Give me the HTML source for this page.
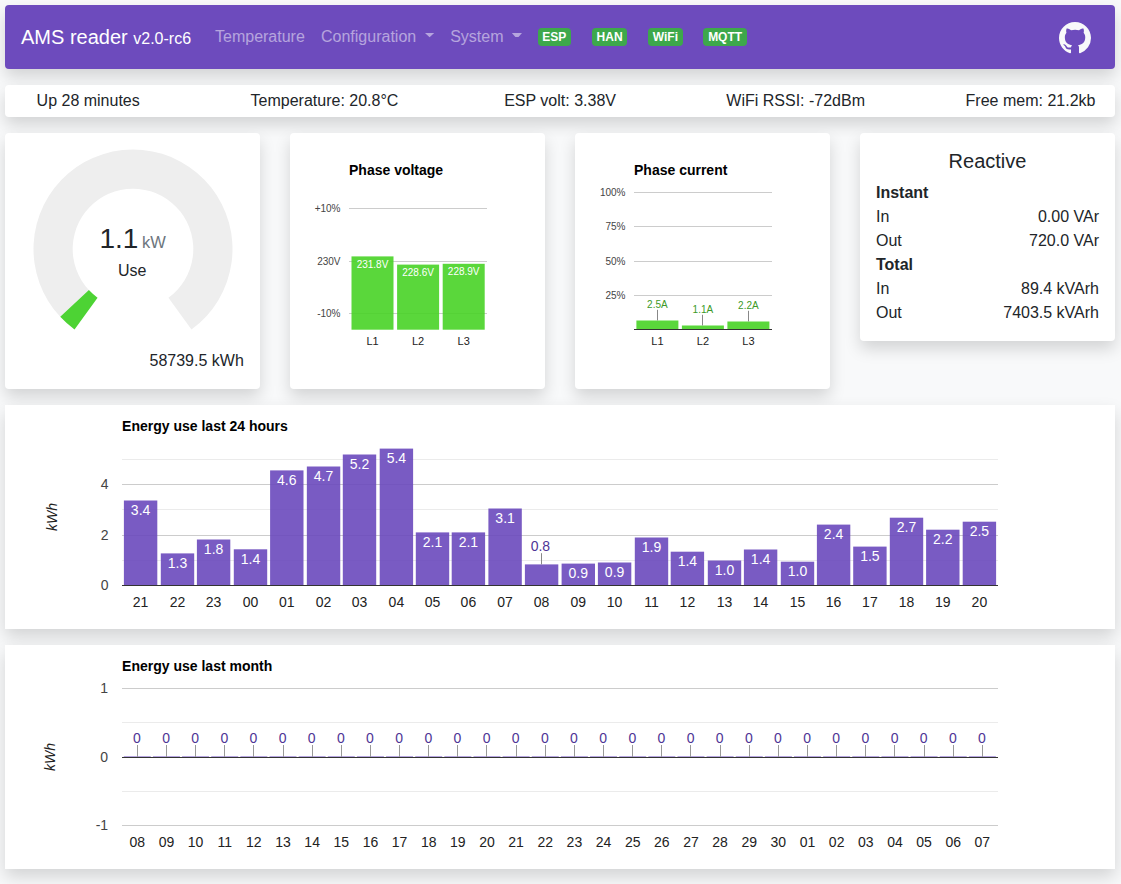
<!DOCTYPE html>
<html><head><meta charset="utf-8"><title>AMS reader</title>
<style>
html,body{margin:0;padding:0;}
body{width:1121px;height:884px;overflow:hidden;background:#f8f9fa;font-family:"Liberation Sans", sans-serif;color:#212529;position:relative;font-size:16px;line-height:1.5;}
.a{position:absolute;white-space:nowrap;}
.card{position:absolute;background:#fff;box-shadow:0 .5rem 1rem rgba(0,0,0,.15);}
.r{border-radius:4px;}
.nav{background:#6d4bbd;}
.nl{color:rgba(255,255,255,.5);font-size:16px;line-height:24px;}
.badge{position:absolute;background:#3da84b;color:#fff;font-weight:bold;font-size:12px;line-height:12px;padding:3px 0;text-align:center;border-radius:4px;height:12px;}
.caret{position:absolute;width:0;height:0;border-top:4.8px solid rgba(255,255,255,.5);border-left:4.8px solid transparent;border-right:4.8px solid transparent;}
svg text{font-family:"Liberation Sans", sans-serif;}
</style></head><body>
<div class="card r nav" style="left:5px;top:5px;width:1110px;height:64px;"></div>
<div class="a" style="left:21px;top:25px;color:#fff;font-size:20px;line-height:24px;">AMS reader <span style="font-size:16px;">v2.0-rc6</span></div>
<div class="a nl" style="left:215px;top:25px;">Temperature</div>
<div class="a nl" style="left:321px;top:25px;">Configuration</div>
<svg class="a" style="left:0;top:0" width="600" height="60"><polygon points="425,33 434.2,33 429.6,37.3" fill="rgba(255,255,255,.5)"/><polygon points="511.9,33 522,33 518.5,37.1 515.4,37.1" fill="rgba(255,255,255,.5)"/></svg>
<div class="a nl" style="left:450.2px;top:25px;">System</div>

<div class="badge" style="left:538px;top:28px;width:32.7px;">ESP</div>
<div class="badge" style="left:592.3px;top:28px;width:34.6px;">HAN</div>
<div class="badge" style="left:648px;top:28px;width:34.8px;">WiFi</div>
<div class="badge" style="left:703.2px;top:28px;width:43.9px;">MQTT</div>
<svg style="position:absolute;left:1059px;top:21.5px;" width="32" height="32" viewBox="0 0 16 16"><path fill="#f8f9fa" d="M8 0C3.58 0 0 3.58 0 8c0 3.54 2.29 6.53 5.47 7.59.4.07.55-.17.55-.38 0-.19-.01-.82-.01-1.49-2.01.37-2.53-.49-2.69-.94-.09-.23-.48-.94-.82-1.13-.28-.15-.68-.52-.01-.53.63-.01 1.08.58 1.23.82.72 1.21 1.87.87 2.33.66.07-.52.28-.87.51-1.07-1.78-.2-3.64-.89-3.64-3.95 0-.87.31-1.59.82-2.15-.08-.2-.36-1.02.08-2.12 0 0 .67-.21 2.2.82.64-.18 1.32-.27 2-.27.68 0 1.36.09 2 .27 1.53-1.04 2.2-.82 2.2-.82.44 1.1.16 1.92.08 2.12.51.56.82 1.27.82 2.15 0 3.07-1.87 3.75-3.65 3.95.29.25.54.73.54 1.48 0 1.07-.01 1.93-.01 2.2 0 .21.15.46.55.38A8.013 8.013 0 0016 8c0-4.42-3.58-8-8-8z"/></svg>

<div class="card r" style="left:5px;top:85px;width:1110px;height:32px;"></div>
<div class="a" style="left:36.6px;top:89px;">Up 28 minutes</div>
<div class="a" style="left:250.6px;top:89px;">Temperature: 20.8°C</div>
<div class="a" style="left:504.2px;top:89px;">ESP volt: 3.38V</div>
<div class="a" style="left:726.3px;top:89px;">WiFi RSSI: -72dBm</div>
<div class="a" style="left:965.6px;top:89px;">Free mem: 21.2kb</div>

<div class="card r" style="left:5px;top:133px;width:255px;height:256px;"></div>
<div class="card r" style="left:290px;top:133px;width:255px;height:256px;"></div>
<div class="card r" style="left:575px;top:133px;width:255px;height:256px;"></div>
<div class="card r" style="left:860px;top:133px;width:255px;height:208px;"></div>
<div class="card" style="left:5px;top:405px;width:1110px;height:224px;"></div>
<div class="card" style="left:5px;top:645px;width:1110px;height:224px;"></div>

<svg class="a" style="left:0;top:0;" width="1121" height="884">
<path d="M60.23,316.86 A99.5,99.5 0 1 1 191.48,329.50 L168.44,297.78 A60.3,60.3 0 1 0 88.90,290.12 Z" fill="#eeeeee"/><path d="M74.52,329.50 A99.5,99.5 0 0 1 60.23,316.86 L88.90,290.12 A60.3,60.3 0 0 0 97.56,297.78 Z" fill="#4dd334"/>
<text x="349" y="175.4" font-size="14" fill="#000" text-anchor="start" font-weight="bold" font-style="normal" >Phase voltage</text>
<rect x="349" y="208" width="138" height="1" fill="#cccccc"/>
<text x="340.5" y="212.1" font-size="10" fill="#444" text-anchor="end" font-weight="normal" font-style="normal" >+10%</text>
<rect x="349" y="261" width="138" height="1" fill="#cccccc"/>
<text x="340.5" y="265.1" font-size="10" fill="#444" text-anchor="end" font-weight="normal" font-style="normal" >230V</text>
<rect x="349" y="313" width="138" height="1" fill="#cccccc"/>
<text x="340.5" y="317.1" font-size="10" fill="#444" text-anchor="end" font-weight="normal" font-style="normal" >-10%</text>
<rect x="351.5" y="256.4" width="42" height="73.30" fill="#48d326" fill-opacity="0.9"/>
<text x="372.50" y="267.60" font-size="10" fill="#ffffff" text-anchor="middle" font-weight="normal" font-style="normal" >231.8V</text>
<text x="372.50" y="345" font-size="11" fill="#222" text-anchor="middle" font-weight="normal" font-style="normal" >L1</text>
<rect x="397.1" y="264.6" width="42" height="65.10" fill="#48d326" fill-opacity="0.9"/>
<text x="418.10" y="275.80" font-size="10" fill="#ffffff" text-anchor="middle" font-weight="normal" font-style="normal" >228.6V</text>
<text x="418.10" y="345" font-size="11" fill="#222" text-anchor="middle" font-weight="normal" font-style="normal" >L2</text>
<rect x="442.7" y="263.8" width="42" height="65.90" fill="#48d326" fill-opacity="0.9"/>
<text x="463.70" y="275.00" font-size="10" fill="#ffffff" text-anchor="middle" font-weight="normal" font-style="normal" >228.9V</text>
<text x="463.70" y="345" font-size="11" fill="#222" text-anchor="middle" font-weight="normal" font-style="normal" >L3</text>
<text x="634" y="175.4" font-size="14" fill="#000" text-anchor="start" font-weight="bold" font-style="normal" >Phase current</text>
<rect x="634" y="192" width="138" height="1" fill="#cccccc"/>
<text x="625.5" y="196.10" font-size="10" fill="#444" text-anchor="end" font-weight="normal" font-style="normal" >100%</text>
<rect x="634" y="226" width="138" height="1" fill="#cccccc"/>
<text x="625.5" y="230.20" font-size="10" fill="#444" text-anchor="end" font-weight="normal" font-style="normal" >75%</text>
<rect x="634" y="261" width="138" height="1" fill="#cccccc"/>
<text x="625.5" y="265.00" font-size="10" fill="#444" text-anchor="end" font-weight="normal" font-style="normal" >50%</text>
<rect x="634" y="295" width="138" height="1" fill="#cccccc"/>
<text x="625.5" y="299.10" font-size="10" fill="#444" text-anchor="end" font-weight="normal" font-style="normal" >25%</text>
<rect x="636.4" y="320.5" width="42" height="8.70" fill="#48d326" fill-opacity="0.9"/>
<rect x="657" y="309.80" width="1" height="10.7" fill="#888"/>
<text x="657.40" y="308.00" font-size="10" fill="#3c9a28" text-anchor="middle" font-weight="normal" font-style="normal" >2.5A</text>
<text x="657.40" y="345" font-size="11" fill="#222" text-anchor="middle" font-weight="normal" font-style="normal" >L1</text>
<rect x="681.9" y="325.5" width="42" height="3.70" fill="#48d326" fill-opacity="0.9"/>
<rect x="702" y="314.80" width="1" height="10.7" fill="#888"/>
<text x="702.90" y="313.00" font-size="10" fill="#3c9a28" text-anchor="middle" font-weight="normal" font-style="normal" >1.1A</text>
<text x="702.90" y="345" font-size="11" fill="#222" text-anchor="middle" font-weight="normal" font-style="normal" >L2</text>
<rect x="727.4" y="321.5" width="42" height="7.70" fill="#48d326" fill-opacity="0.9"/>
<rect x="748" y="310.80" width="1" height="10.7" fill="#888"/>
<text x="748.40" y="309.00" font-size="10" fill="#3c9a28" text-anchor="middle" font-weight="normal" font-style="normal" >2.2A</text>
<text x="748.40" y="345" font-size="11" fill="#222" text-anchor="middle" font-weight="normal" font-style="normal" >L3</text>
<rect x="634" y="329" width="138" height="1" fill="#333"/>
<text x="122.1" y="431" font-size="14" fill="#000" text-anchor="start" font-weight="bold" font-style="normal" >Energy use last 24 hours</text>
<rect x="122" y="459" width="876" height="1" fill="#ebebeb"/>
<rect x="122" y="509" width="876" height="1" fill="#ebebeb"/>
<rect x="122" y="560" width="876" height="1" fill="#ebebeb"/>
<rect x="122" y="484" width="876" height="1" fill="#cccccc"/>
<rect x="122" y="535" width="876" height="1" fill="#cccccc"/>
<text x="108.5" y="590.20" font-size="14" fill="#444" text-anchor="end" font-weight="normal" font-style="normal" >0</text>
<text x="108.5" y="539.80" font-size="14" fill="#444" text-anchor="end" font-weight="normal" font-style="normal" >2</text>
<text x="108.5" y="489.40" font-size="14" fill="#444" text-anchor="end" font-weight="normal" font-style="normal" >4</text>
<rect x="123.90" y="500.50" width="33.40" height="84.70" fill="#6a49bd" fill-opacity="0.9"/>
<text x="140.60" y="514.90" font-size="14" fill="#ffffff" text-anchor="middle" font-weight="normal" font-style="normal" >3.4</text>
<text x="140.60" y="607" font-size="14" fill="#222" text-anchor="middle" font-weight="normal" font-style="normal" >21</text>
<rect x="160.80" y="553.40" width="33.40" height="31.80" fill="#6a49bd" fill-opacity="0.9"/>
<text x="177.50" y="567.80" font-size="14" fill="#ffffff" text-anchor="middle" font-weight="normal" font-style="normal" >1.3</text>
<text x="177.50" y="607" font-size="14" fill="#222" text-anchor="middle" font-weight="normal" font-style="normal" >22</text>
<rect x="196.90" y="539.50" width="33.40" height="45.70" fill="#6a49bd" fill-opacity="0.9"/>
<text x="213.60" y="553.90" font-size="14" fill="#ffffff" text-anchor="middle" font-weight="normal" font-style="normal" >1.8</text>
<text x="213.60" y="607" font-size="14" fill="#222" text-anchor="middle" font-weight="normal" font-style="normal" >23</text>
<rect x="233.80" y="549.30" width="33.40" height="35.90" fill="#6a49bd" fill-opacity="0.9"/>
<text x="250.50" y="563.70" font-size="14" fill="#ffffff" text-anchor="middle" font-weight="normal" font-style="normal" >1.4</text>
<text x="250.50" y="607" font-size="14" fill="#222" text-anchor="middle" font-weight="normal" font-style="normal" >00</text>
<rect x="270.10" y="470.40" width="33.40" height="114.80" fill="#6a49bd" fill-opacity="0.9"/>
<text x="286.80" y="484.80" font-size="14" fill="#ffffff" text-anchor="middle" font-weight="normal" font-style="normal" >4.6</text>
<text x="286.80" y="607" font-size="14" fill="#222" text-anchor="middle" font-weight="normal" font-style="normal" >01</text>
<rect x="306.85" y="466.50" width="33.40" height="118.70" fill="#6a49bd" fill-opacity="0.9"/>
<text x="323.55" y="480.90" font-size="14" fill="#ffffff" text-anchor="middle" font-weight="normal" font-style="normal" >4.7</text>
<text x="323.55" y="607" font-size="14" fill="#222" text-anchor="middle" font-weight="normal" font-style="normal" >02</text>
<rect x="342.80" y="454.50" width="33.40" height="130.70" fill="#6a49bd" fill-opacity="0.9"/>
<text x="359.50" y="468.90" font-size="14" fill="#ffffff" text-anchor="middle" font-weight="normal" font-style="normal" >5.2</text>
<text x="359.50" y="607" font-size="14" fill="#222" text-anchor="middle" font-weight="normal" font-style="normal" >03</text>
<rect x="379.70" y="448.60" width="33.40" height="136.60" fill="#6a49bd" fill-opacity="0.9"/>
<text x="396.40" y="463.00" font-size="14" fill="#ffffff" text-anchor="middle" font-weight="normal" font-style="normal" >5.4</text>
<text x="396.40" y="607" font-size="14" fill="#222" text-anchor="middle" font-weight="normal" font-style="normal" >04</text>
<rect x="415.80" y="532.40" width="33.40" height="52.80" fill="#6a49bd" fill-opacity="0.9"/>
<text x="432.50" y="546.80" font-size="14" fill="#ffffff" text-anchor="middle" font-weight="normal" font-style="normal" >2.1</text>
<text x="432.50" y="607" font-size="14" fill="#222" text-anchor="middle" font-weight="normal" font-style="normal" >05</text>
<rect x="451.70" y="532.40" width="33.40" height="52.80" fill="#6a49bd" fill-opacity="0.9"/>
<text x="468.40" y="546.80" font-size="14" fill="#ffffff" text-anchor="middle" font-weight="normal" font-style="normal" >2.1</text>
<text x="468.40" y="607" font-size="14" fill="#222" text-anchor="middle" font-weight="normal" font-style="normal" >06</text>
<rect x="488.40" y="508.50" width="33.40" height="76.70" fill="#6a49bd" fill-opacity="0.9"/>
<text x="505.10" y="522.90" font-size="14" fill="#ffffff" text-anchor="middle" font-weight="normal" font-style="normal" >3.1</text>
<text x="505.10" y="607" font-size="14" fill="#222" text-anchor="middle" font-weight="normal" font-style="normal" >07</text>
<rect x="524.90" y="564.40" width="33.40" height="20.80" fill="#6a49bd" fill-opacity="0.9"/>
<rect x="541" y="553.20" width="1" height="11.2" fill="#888"/>
<text x="540.40" y="550.90" font-size="14" fill="#4e3596" text-anchor="middle" font-weight="normal" font-style="normal" >0.8</text>
<text x="541.60" y="607" font-size="14" fill="#222" text-anchor="middle" font-weight="normal" font-style="normal" >08</text>
<rect x="561.60" y="563.60" width="33.40" height="21.60" fill="#6a49bd" fill-opacity="0.9"/>
<text x="578.30" y="578.00" font-size="14" fill="#ffffff" text-anchor="middle" font-weight="normal" font-style="normal" >0.9</text>
<text x="578.30" y="607" font-size="14" fill="#222" text-anchor="middle" font-weight="normal" font-style="normal" >09</text>
<rect x="597.90" y="562.50" width="33.40" height="22.70" fill="#6a49bd" fill-opacity="0.9"/>
<text x="614.60" y="576.90" font-size="14" fill="#ffffff" text-anchor="middle" font-weight="normal" font-style="normal" >0.9</text>
<text x="614.60" y="607" font-size="14" fill="#222" text-anchor="middle" font-weight="normal" font-style="normal" >10</text>
<rect x="634.80" y="537.50" width="33.40" height="47.70" fill="#6a49bd" fill-opacity="0.9"/>
<text x="651.50" y="551.90" font-size="14" fill="#ffffff" text-anchor="middle" font-weight="normal" font-style="normal" >1.9</text>
<text x="651.50" y="607" font-size="14" fill="#222" text-anchor="middle" font-weight="normal" font-style="normal" >11</text>
<rect x="670.70" y="551.70" width="33.40" height="33.50" fill="#6a49bd" fill-opacity="0.9"/>
<text x="687.40" y="566.10" font-size="14" fill="#ffffff" text-anchor="middle" font-weight="normal" font-style="normal" >1.4</text>
<text x="687.40" y="607" font-size="14" fill="#222" text-anchor="middle" font-weight="normal" font-style="normal" >12</text>
<rect x="707.80" y="560.50" width="33.40" height="24.70" fill="#6a49bd" fill-opacity="0.9"/>
<text x="724.50" y="574.90" font-size="14" fill="#ffffff" text-anchor="middle" font-weight="normal" font-style="normal" >1.0</text>
<text x="724.50" y="607" font-size="14" fill="#222" text-anchor="middle" font-weight="normal" font-style="normal" >13</text>
<rect x="743.90" y="549.50" width="33.40" height="35.70" fill="#6a49bd" fill-opacity="0.9"/>
<text x="760.60" y="563.90" font-size="14" fill="#ffffff" text-anchor="middle" font-weight="normal" font-style="normal" >1.4</text>
<text x="760.60" y="607" font-size="14" fill="#222" text-anchor="middle" font-weight="normal" font-style="normal" >14</text>
<rect x="780.80" y="561.70" width="33.40" height="23.50" fill="#6a49bd" fill-opacity="0.9"/>
<text x="797.50" y="576.10" font-size="14" fill="#ffffff" text-anchor="middle" font-weight="normal" font-style="normal" >1.0</text>
<text x="797.50" y="607" font-size="14" fill="#222" text-anchor="middle" font-weight="normal" font-style="normal" >15</text>
<rect x="816.90" y="524.60" width="33.40" height="60.60" fill="#6a49bd" fill-opacity="0.9"/>
<text x="833.60" y="539.00" font-size="14" fill="#ffffff" text-anchor="middle" font-weight="normal" font-style="normal" >2.4</text>
<text x="833.60" y="607" font-size="14" fill="#222" text-anchor="middle" font-weight="normal" font-style="normal" >16</text>
<rect x="853.20" y="546.60" width="33.40" height="38.60" fill="#6a49bd" fill-opacity="0.9"/>
<text x="869.90" y="561.00" font-size="14" fill="#ffffff" text-anchor="middle" font-weight="normal" font-style="normal" >1.5</text>
<text x="869.90" y="607" font-size="14" fill="#222" text-anchor="middle" font-weight="normal" font-style="normal" >17</text>
<rect x="889.80" y="517.70" width="33.40" height="67.50" fill="#6a49bd" fill-opacity="0.9"/>
<text x="906.50" y="532.10" font-size="14" fill="#ffffff" text-anchor="middle" font-weight="normal" font-style="normal" >2.7</text>
<text x="906.50" y="607" font-size="14" fill="#222" text-anchor="middle" font-weight="normal" font-style="normal" >18</text>
<rect x="926.10" y="529.70" width="33.40" height="55.50" fill="#6a49bd" fill-opacity="0.9"/>
<text x="942.80" y="544.10" font-size="14" fill="#ffffff" text-anchor="middle" font-weight="normal" font-style="normal" >2.2</text>
<text x="942.80" y="607" font-size="14" fill="#222" text-anchor="middle" font-weight="normal" font-style="normal" >19</text>
<rect x="962.70" y="521.70" width="33.40" height="63.50" fill="#6a49bd" fill-opacity="0.9"/>
<text x="979.40" y="536.10" font-size="14" fill="#ffffff" text-anchor="middle" font-weight="normal" font-style="normal" >2.5</text>
<text x="979.40" y="607" font-size="14" fill="#222" text-anchor="middle" font-weight="normal" font-style="normal" >20</text>
<rect x="122" y="585" width="876" height="1" fill="#333"/>
<text x="0" y="0" font-size="14" fill="#222" text-anchor="middle" font-weight="normal" font-style="italic" transform="translate(57,517) rotate(-90)">kWh</text>
<text x="122.1" y="670.8" font-size="14" fill="#000" text-anchor="start" font-weight="bold" font-style="normal" >Energy use last month</text>
<rect x="122" y="722" width="876" height="1" fill="#ebebeb"/>
<rect x="122" y="791" width="876" height="1" fill="#ebebeb"/>
<rect x="122" y="688" width="876" height="1" fill="#cccccc"/>
<rect x="122" y="825" width="876" height="1" fill="#cccccc"/>
<text x="108.1" y="693.45" font-size="14" fill="#444" text-anchor="end" font-weight="normal" font-style="normal" >1</text>
<text x="108.1" y="761.90" font-size="14" fill="#444" text-anchor="end" font-weight="normal" font-style="normal" >0</text>
<text x="108.1" y="830.35" font-size="14" fill="#444" text-anchor="end" font-weight="normal" font-style="normal" >-1</text>
<rect x="123.80" y="756" width="27.00" height="1" fill="#b6a5e0"/>
<rect x="137" y="745" width="1" height="12" fill="#999"/>
<text x="136.90" y="742.80" font-size="14" fill="#4e3596" text-anchor="middle" font-weight="normal" font-style="normal" >0</text>
<text x="137.30" y="847" font-size="14" fill="#222" text-anchor="middle" font-weight="normal" font-style="normal" >08</text>
<rect x="152.94" y="756" width="27.00" height="1" fill="#b6a5e0"/>
<rect x="166" y="745" width="1" height="12" fill="#999"/>
<text x="166.04" y="742.80" font-size="14" fill="#4e3596" text-anchor="middle" font-weight="normal" font-style="normal" >0</text>
<text x="166.44" y="847" font-size="14" fill="#222" text-anchor="middle" font-weight="normal" font-style="normal" >09</text>
<rect x="182.08" y="756" width="27.00" height="1" fill="#b6a5e0"/>
<rect x="195" y="745" width="1" height="12" fill="#999"/>
<text x="195.18" y="742.80" font-size="14" fill="#4e3596" text-anchor="middle" font-weight="normal" font-style="normal" >0</text>
<text x="195.58" y="847" font-size="14" fill="#222" text-anchor="middle" font-weight="normal" font-style="normal" >10</text>
<rect x="211.22" y="756" width="27.00" height="1" fill="#b6a5e0"/>
<rect x="224" y="745" width="1" height="12" fill="#999"/>
<text x="224.32" y="742.80" font-size="14" fill="#4e3596" text-anchor="middle" font-weight="normal" font-style="normal" >0</text>
<text x="224.72" y="847" font-size="14" fill="#222" text-anchor="middle" font-weight="normal" font-style="normal" >11</text>
<rect x="240.36" y="756" width="27.00" height="1" fill="#b6a5e0"/>
<rect x="253" y="745" width="1" height="12" fill="#999"/>
<text x="253.46" y="742.80" font-size="14" fill="#4e3596" text-anchor="middle" font-weight="normal" font-style="normal" >0</text>
<text x="253.86" y="847" font-size="14" fill="#222" text-anchor="middle" font-weight="normal" font-style="normal" >12</text>
<rect x="269.50" y="756" width="27.00" height="1" fill="#b6a5e0"/>
<rect x="283" y="745" width="1" height="12" fill="#999"/>
<text x="282.60" y="742.80" font-size="14" fill="#4e3596" text-anchor="middle" font-weight="normal" font-style="normal" >0</text>
<text x="283.00" y="847" font-size="14" fill="#222" text-anchor="middle" font-weight="normal" font-style="normal" >13</text>
<rect x="298.64" y="756" width="27.00" height="1" fill="#b6a5e0"/>
<rect x="312" y="745" width="1" height="12" fill="#999"/>
<text x="311.74" y="742.80" font-size="14" fill="#4e3596" text-anchor="middle" font-weight="normal" font-style="normal" >0</text>
<text x="312.14" y="847" font-size="14" fill="#222" text-anchor="middle" font-weight="normal" font-style="normal" >14</text>
<rect x="327.78" y="756" width="27.00" height="1" fill="#b6a5e0"/>
<rect x="341" y="745" width="1" height="12" fill="#999"/>
<text x="340.88" y="742.80" font-size="14" fill="#4e3596" text-anchor="middle" font-weight="normal" font-style="normal" >0</text>
<text x="341.28" y="847" font-size="14" fill="#222" text-anchor="middle" font-weight="normal" font-style="normal" >15</text>
<rect x="356.92" y="756" width="27.00" height="1" fill="#b6a5e0"/>
<rect x="370" y="745" width="1" height="12" fill="#999"/>
<text x="370.02" y="742.80" font-size="14" fill="#4e3596" text-anchor="middle" font-weight="normal" font-style="normal" >0</text>
<text x="370.42" y="847" font-size="14" fill="#222" text-anchor="middle" font-weight="normal" font-style="normal" >16</text>
<rect x="386.06" y="756" width="27.00" height="1" fill="#b6a5e0"/>
<rect x="399" y="745" width="1" height="12" fill="#999"/>
<text x="399.16" y="742.80" font-size="14" fill="#4e3596" text-anchor="middle" font-weight="normal" font-style="normal" >0</text>
<text x="399.56" y="847" font-size="14" fill="#222" text-anchor="middle" font-weight="normal" font-style="normal" >17</text>
<rect x="415.20" y="756" width="27.00" height="1" fill="#b6a5e0"/>
<rect x="428" y="745" width="1" height="12" fill="#999"/>
<text x="428.30" y="742.80" font-size="14" fill="#4e3596" text-anchor="middle" font-weight="normal" font-style="normal" >0</text>
<text x="428.70" y="847" font-size="14" fill="#222" text-anchor="middle" font-weight="normal" font-style="normal" >18</text>
<rect x="444.34" y="756" width="27.00" height="1" fill="#b6a5e0"/>
<rect x="457" y="745" width="1" height="12" fill="#999"/>
<text x="457.44" y="742.80" font-size="14" fill="#4e3596" text-anchor="middle" font-weight="normal" font-style="normal" >0</text>
<text x="457.84" y="847" font-size="14" fill="#222" text-anchor="middle" font-weight="normal" font-style="normal" >19</text>
<rect x="473.48" y="756" width="27.00" height="1" fill="#b6a5e0"/>
<rect x="486" y="745" width="1" height="12" fill="#999"/>
<text x="486.58" y="742.80" font-size="14" fill="#4e3596" text-anchor="middle" font-weight="normal" font-style="normal" >0</text>
<text x="486.98" y="847" font-size="14" fill="#222" text-anchor="middle" font-weight="normal" font-style="normal" >20</text>
<rect x="502.62" y="756" width="27.00" height="1" fill="#b6a5e0"/>
<rect x="516" y="745" width="1" height="12" fill="#999"/>
<text x="515.72" y="742.80" font-size="14" fill="#4e3596" text-anchor="middle" font-weight="normal" font-style="normal" >0</text>
<text x="516.12" y="847" font-size="14" fill="#222" text-anchor="middle" font-weight="normal" font-style="normal" >21</text>
<rect x="531.76" y="756" width="27.00" height="1" fill="#b6a5e0"/>
<rect x="545" y="745" width="1" height="12" fill="#999"/>
<text x="544.86" y="742.80" font-size="14" fill="#4e3596" text-anchor="middle" font-weight="normal" font-style="normal" >0</text>
<text x="545.26" y="847" font-size="14" fill="#222" text-anchor="middle" font-weight="normal" font-style="normal" >22</text>
<rect x="560.90" y="756" width="27.00" height="1" fill="#b6a5e0"/>
<rect x="574" y="745" width="1" height="12" fill="#999"/>
<text x="574.00" y="742.80" font-size="14" fill="#4e3596" text-anchor="middle" font-weight="normal" font-style="normal" >0</text>
<text x="574.40" y="847" font-size="14" fill="#222" text-anchor="middle" font-weight="normal" font-style="normal" >23</text>
<rect x="590.04" y="756" width="27.00" height="1" fill="#b6a5e0"/>
<rect x="603" y="745" width="1" height="12" fill="#999"/>
<text x="603.14" y="742.80" font-size="14" fill="#4e3596" text-anchor="middle" font-weight="normal" font-style="normal" >0</text>
<text x="603.54" y="847" font-size="14" fill="#222" text-anchor="middle" font-weight="normal" font-style="normal" >24</text>
<rect x="619.18" y="756" width="27.00" height="1" fill="#b6a5e0"/>
<rect x="632" y="745" width="1" height="12" fill="#999"/>
<text x="632.28" y="742.80" font-size="14" fill="#4e3596" text-anchor="middle" font-weight="normal" font-style="normal" >0</text>
<text x="632.68" y="847" font-size="14" fill="#222" text-anchor="middle" font-weight="normal" font-style="normal" >25</text>
<rect x="648.32" y="756" width="27.00" height="1" fill="#b6a5e0"/>
<rect x="661" y="745" width="1" height="12" fill="#999"/>
<text x="661.42" y="742.80" font-size="14" fill="#4e3596" text-anchor="middle" font-weight="normal" font-style="normal" >0</text>
<text x="661.82" y="847" font-size="14" fill="#222" text-anchor="middle" font-weight="normal" font-style="normal" >26</text>
<rect x="677.46" y="756" width="27.00" height="1" fill="#b6a5e0"/>
<rect x="690" y="745" width="1" height="12" fill="#999"/>
<text x="690.56" y="742.80" font-size="14" fill="#4e3596" text-anchor="middle" font-weight="normal" font-style="normal" >0</text>
<text x="690.96" y="847" font-size="14" fill="#222" text-anchor="middle" font-weight="normal" font-style="normal" >27</text>
<rect x="706.60" y="756" width="27.00" height="1" fill="#b6a5e0"/>
<rect x="720" y="745" width="1" height="12" fill="#999"/>
<text x="719.70" y="742.80" font-size="14" fill="#4e3596" text-anchor="middle" font-weight="normal" font-style="normal" >0</text>
<text x="720.10" y="847" font-size="14" fill="#222" text-anchor="middle" font-weight="normal" font-style="normal" >28</text>
<rect x="735.74" y="756" width="27.00" height="1" fill="#b6a5e0"/>
<rect x="749" y="745" width="1" height="12" fill="#999"/>
<text x="748.84" y="742.80" font-size="14" fill="#4e3596" text-anchor="middle" font-weight="normal" font-style="normal" >0</text>
<text x="749.24" y="847" font-size="14" fill="#222" text-anchor="middle" font-weight="normal" font-style="normal" >29</text>
<rect x="764.88" y="756" width="27.00" height="1" fill="#b6a5e0"/>
<rect x="778" y="745" width="1" height="12" fill="#999"/>
<text x="777.98" y="742.80" font-size="14" fill="#4e3596" text-anchor="middle" font-weight="normal" font-style="normal" >0</text>
<text x="778.38" y="847" font-size="14" fill="#222" text-anchor="middle" font-weight="normal" font-style="normal" >30</text>
<rect x="794.02" y="756" width="27.00" height="1" fill="#b6a5e0"/>
<rect x="807" y="745" width="1" height="12" fill="#999"/>
<text x="807.12" y="742.80" font-size="14" fill="#4e3596" text-anchor="middle" font-weight="normal" font-style="normal" >0</text>
<text x="807.52" y="847" font-size="14" fill="#222" text-anchor="middle" font-weight="normal" font-style="normal" >01</text>
<rect x="823.16" y="756" width="27.00" height="1" fill="#b6a5e0"/>
<rect x="836" y="745" width="1" height="12" fill="#999"/>
<text x="836.26" y="742.80" font-size="14" fill="#4e3596" text-anchor="middle" font-weight="normal" font-style="normal" >0</text>
<text x="836.66" y="847" font-size="14" fill="#222" text-anchor="middle" font-weight="normal" font-style="normal" >02</text>
<rect x="852.30" y="756" width="27.00" height="1" fill="#b6a5e0"/>
<rect x="865" y="745" width="1" height="12" fill="#999"/>
<text x="865.40" y="742.80" font-size="14" fill="#4e3596" text-anchor="middle" font-weight="normal" font-style="normal" >0</text>
<text x="865.80" y="847" font-size="14" fill="#222" text-anchor="middle" font-weight="normal" font-style="normal" >03</text>
<rect x="881.44" y="756" width="27.00" height="1" fill="#b6a5e0"/>
<rect x="894" y="745" width="1" height="12" fill="#999"/>
<text x="894.54" y="742.80" font-size="14" fill="#4e3596" text-anchor="middle" font-weight="normal" font-style="normal" >0</text>
<text x="894.94" y="847" font-size="14" fill="#222" text-anchor="middle" font-weight="normal" font-style="normal" >04</text>
<rect x="910.58" y="756" width="27.00" height="1" fill="#b6a5e0"/>
<rect x="924" y="745" width="1" height="12" fill="#999"/>
<text x="923.68" y="742.80" font-size="14" fill="#4e3596" text-anchor="middle" font-weight="normal" font-style="normal" >0</text>
<text x="924.08" y="847" font-size="14" fill="#222" text-anchor="middle" font-weight="normal" font-style="normal" >05</text>
<rect x="939.72" y="756" width="27.00" height="1" fill="#b6a5e0"/>
<rect x="953" y="745" width="1" height="12" fill="#999"/>
<text x="952.82" y="742.80" font-size="14" fill="#4e3596" text-anchor="middle" font-weight="normal" font-style="normal" >0</text>
<text x="953.22" y="847" font-size="14" fill="#222" text-anchor="middle" font-weight="normal" font-style="normal" >06</text>
<rect x="968.86" y="756" width="27.00" height="1" fill="#b6a5e0"/>
<rect x="982" y="745" width="1" height="12" fill="#999"/>
<text x="981.96" y="742.80" font-size="14" fill="#4e3596" text-anchor="middle" font-weight="normal" font-style="normal" >0</text>
<text x="982.36" y="847" font-size="14" fill="#222" text-anchor="middle" font-weight="normal" font-style="normal" >07</text>
<rect x="122" y="757" width="876" height="1" fill="#333"/>
<text x="0" y="0" font-size="14" fill="#222" text-anchor="middle" font-weight="normal" font-style="italic" transform="translate(55.2,757) rotate(-90)">kWh</text>
</svg>

<div class="a" style="left:99.5px;top:223px;font-size:28px;line-height:32px;">1.1</div><div class="a" style="left:142px;top:232px;font-size:16.5px;line-height:20px;color:#6c757d;">kW</div>
<div class="a" style="left:118px;top:259px;">Use</div>
<div class="a" style="left:149.5px;top:349px;">58739.5 kWh</div>

<div class="a" style="left:860px;top:149px;width:255px;text-align:center;font-size:20px;line-height:24px;">Reactive</div>
<div class="a" style="left:876px;top:181px;width:223px;">
 <div style="font-weight:bold;">Instant</div>
 <div style="display:flex;justify-content:space-between;"><span>In</span><span>0.00 VAr</span></div>
 <div style="display:flex;justify-content:space-between;"><span>Out</span><span>720.0 VAr</span></div>
 <div style="font-weight:bold;">Total</div>
 <div style="display:flex;justify-content:space-between;"><span>In</span><span>89.4 kVArh</span></div>
 <div style="display:flex;justify-content:space-between;"><span>Out</span><span>7403.5 kVArh</span></div>
</div>
</body></html>
